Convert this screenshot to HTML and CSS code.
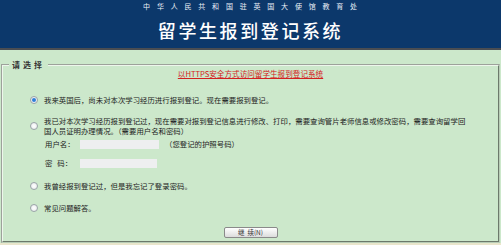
FILE: index.html
```html
<!DOCTYPE html>
<html lang="zh-CN">
<head>
  <meta charset="UTF-8">
  <title>留学生报到登记系统</title>
  <link rel="stylesheet" href="styles.css">
</head>
<body>
  <header class="top">
    <div class="top-sub">中华人民共和国驻英国大使馆教育处</div>
    <div class="top-title">留学生报到登记系统</div>
  </header>

  <div class="main">
    <fieldset class="box">
      <legend>请选择</legend>
      <div class="https"><a href="#">以HTTPS安全方式访问留学生报到登记系统</a></div>

      <div class="opt opt-1">
        <span class="radio checked"></span>
        <span class="txt">我来英国后，尚未对本次学习经历进行报到登记。现在需要报到登记。</span>
      </div>

      <div class="opt opt-2">
        <span class="radio"></span>
        <span class="txt">我已对本次学习经历报到登记过，现在需要对报到登记信息进行修改、打印，需要查询管片老师信息或修改密码，需要查询留学回<br>国人员证明办理情况。（需要用户名和密码）</span>
      </div>

      <div class="field field-user">
        <label>用户名：</label>
        <span class="input"></span>
        <span class="hint">（您登记的护照号码）</span>
      </div>
      <div class="field field-pwd">
        <label>密&nbsp;&nbsp;&nbsp;码：</label>
        <span class="input short"></span>
      </div>

      <div class="opt opt-3">
        <span class="radio"></span>
        <span class="txt">我曾经报到登记过，但是我忘记了登录密码。</span>
      </div>

      <div class="opt opt-4">
        <span class="radio"></span>
        <span class="txt">常见问题解答。</span>
      </div>

      <div class="actions">
        <button type="button">继&nbsp;&nbsp;续(N)</button>
      </div>
    </fieldset>
  </div>
</body>
</html>
```

FILE: styles.css
```css
body { margin: 0; padding: 0; background: #e9e6cc; font-family: "Noto Sans CJK SC", "Noto Sans", sans-serif; color: #222; }

.top { height: 48px; background: #0c386b; border-bottom: 2px solid #4a4d52; color: #fff; text-align: center; }
.top-sub { padding-top: 2px; font-size: 7px; line-height: 9px; letter-spacing: 6.8px; text-indent: 6px; color: #e8eef6; }
.top-title { margin-top: 7px; font-size: 18px; line-height: 24px; letter-spacing: 2.6px; font-weight: 500; }

.main { background: #cce8cb; height: 193px; padding-top: 11px; box-sizing: border-box; }
.box { margin: 0 1px; padding: 0 0 3px 0; border: 2px groove #eef6ec; border-bottom-color: #b8cdb6; border-right-color: #b8cdb6; font-size: 7.4px; line-height: 10px; }
.box legend { margin-left: 6px; padding: 0 3px; font-size: 8px; font-weight: bold; letter-spacing: 3px; color: #333; line-height: 8px; }

.https { text-align: center; font-size: 7.6px; }
.https a { color: #d42020; }

.opt { display: flex; align-items: center; padding-left: 27px; gap: 6px; }
.opt .txt { flex: 1; white-space: nowrap; }
.opt-1 { margin-top: 16px; }
.opt-2 { margin-top: 11px; }
.opt-3 { margin-top: 13px; }
.opt-4 { margin-top: 12px; }

.radio { flex: none; width: 6px; height: 6px; border: 1px solid #9aa3a8; border-radius: 50%; background: radial-gradient(circle, #ffffff 0%, #e4e8ea 100%); position: relative; }
.radio.checked::after { content: ""; position: absolute; left: 1px; top: 1px; width: 4px; height: 4px; border-radius: 50%; background: #2f7ed8; }

.field { display: flex; align-items: center; padding-left: 42px; }
.field-user { margin-top: 3px; }
.field-pwd { margin-top: 9px; }
.field label { width: 35px; }
.input { width: 79px; height: 9px; background: #eeeff0; }
.input.short { width: 77px; }
.hint { margin-left: 6px; }

.actions { margin-top: 14px; text-align: center; }
.actions button { width: 54px; height: 11px; padding: 0; font-family: inherit; font-size: 6.5px; line-height: 9px; color: #333; border: 1px solid #8a8a8a; border-radius: 2px; background: linear-gradient(#ffffff, #dcdcdc); }
```
